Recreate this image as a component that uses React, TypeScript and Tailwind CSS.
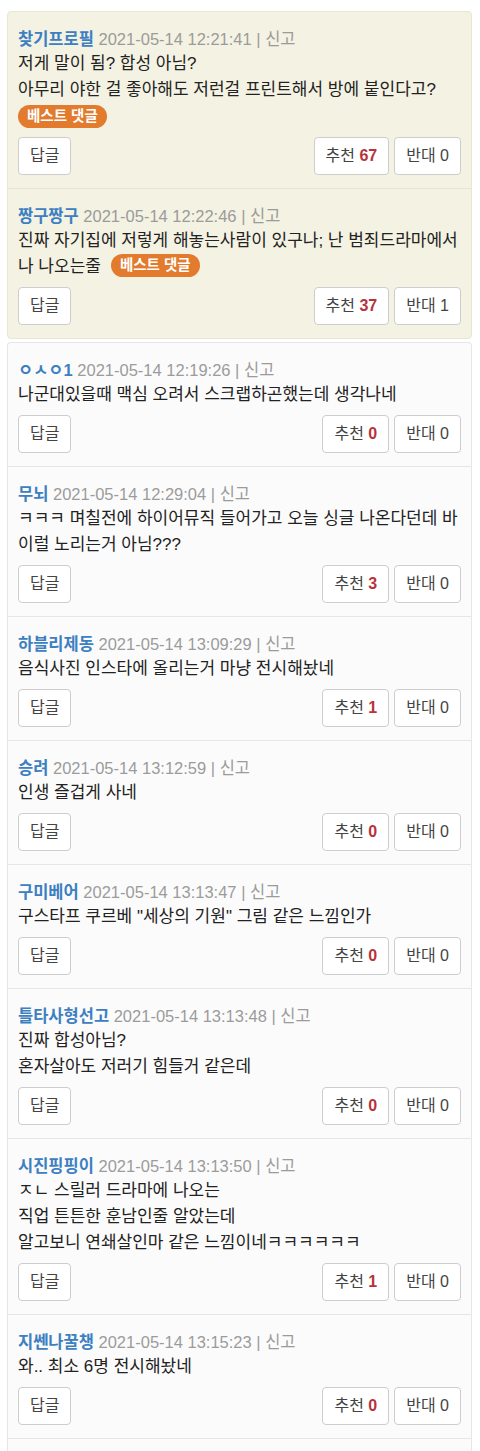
import React from "react";

type C = {
  name: string;
  date: string;
  lines: React.ReactNode;
  up: number;
  down: number;
  best?: "block" | "inline";
};

const best: C[] = [
  {
    name: "찾기프로필",
    date: "2021-05-14 12:21:41",
    lines: (
      <>
        저게 말이 됨? 합성 아님?
        <br />
        아무리 야한 걸 좋아해도 저런걸 프린트해서 방에 붙인다고?
      </>
    ),
    up: 67,
    down: 0,
    best: "block",
  },
  {
    name: "짱구짱구",
    date: "2021-05-14 12:22:46",
    lines: (
      <>
        진짜 자기집에 저렇게 해놓는사람이 있구나; 난 범죄드라마에서
        <br />
        나 나오는줄
      </>
    ),
    up: 37,
    down: 1,
    best: "inline",
  },
];

const normal: C[] = [
  { name: "ㅇㅅㅇ1", date: "2021-05-14 12:19:26", lines: <>나군대있을때 맥심 오려서 스크랩하곤했는데 생각나네</>, up: 0, down: 0 },
  {
    name: "무뇌",
    date: "2021-05-14 12:29:04",
    lines: (
      <>
        ㅋㅋㅋ 며칠전에 하이어뮤직 들어가고 오늘 싱글 나온다던데 바
        <br />
        이럴 노리는거 아님???
      </>
    ),
    up: 3,
    down: 0,
  },
  { name: "하블리제동", date: "2021-05-14 13:09:29", lines: <>음식사진 인스타에 올리는거 마냥 전시해놨네</>, up: 1, down: 0 },
  { name: "승려", date: "2021-05-14 13:12:59", lines: <>인생 즐겁게 사네</>, up: 0, down: 0 },
  { name: "구미베어", date: "2021-05-14 13:13:47", lines: <>구스타프 쿠르베 "세상의 기원" 그림 같은 느낌인가</>, up: 0, down: 0 },
  {
    name: "틀타사형선고",
    date: "2021-05-14 13:13:48",
    lines: (
      <>
        진짜 합성아님?
        <br />
        혼자살아도 저러기 힘들거 같은데
      </>
    ),
    up: 0,
    down: 0,
  },
  {
    name: "시진핑핑이",
    date: "2021-05-14 13:13:50",
    lines: (
      <>
        ㅈㄴ 스릴러 드라마에 나오는
        <br />
        직업 튼튼한 훈남인줄 알았는데
        <br />
        알고보니 연쇄살인마 같은 느낌이네ㅋㅋㅋㅋㅋㅋ
      </>
    ),
    up: 1,
    down: 0,
  },
  { name: "지쎈나꿀챙", date: "2021-05-14 13:15:23", lines: <>와.. 최소 6명 전시해놨네</>, up: 0, down: 0 },
];

function Badge({ inline }: { inline?: boolean }) {
  return (
    <span
      className={
        "inline-flex h-[23px] items-center rounded-full bg-[#e27b2d] px-[9px] text-[14.5px] font-bold leading-none text-white align-middle " +
        (inline ? "ml-[10px] relative top-[-2px]" : "")
      }
    >
      베스트 댓글
    </span>
  );
}

function Btn({ children }: { children: React.ReactNode }) {
  return (
    <button className="flex h-[38px] items-center rounded-[4px] border border-[#cdcdcd] bg-white px-[11px] text-[16px] text-[#444]">
      {children}
    </button>
  );
}

function Row({ c, last, bestBox }: { c: C; last?: boolean; bestBox?: boolean }) {
  return (
    <div
      className={
        "px-[10px] pt-[16px] pb-[13px] " +
        (last ? "" : bestBox ? "border-b border-[#e7e4cf]" : "border-b border-[#e6e6e6]")
      }
    >
      <div className="whitespace-nowrap text-[16.5px] leading-[23px]">
        <span className="font-bold text-[#3d80c2]">{c.name}</span>{" "}
        <span className="text-[#9b9b9b]">{c.date} | 신고</span>
      </div>
      <div className="whitespace-nowrap text-[17px] leading-[26px] text-[#222]">
        {c.lines}
        {c.best === "inline" && <Badge inline />}
      </div>
      {c.best === "block" && (
        <div className="flex h-[27px] items-center">
          <Badge />
        </div>
      )}
      <div className="mt-[7px] flex items-center justify-between">
        <Btn>답글</Btn>
        <div className="flex gap-[5px]">
          <Btn>
            추천&nbsp;<b className="text-[#b8323a]">{c.up}</b>
          </Btn>
          <Btn>반대&nbsp;{c.down}</Btn>
        </div>
      </div>
    </div>
  );
}

export default function App() {
  return (
    <div
      className="min-h-[1451px] bg-white pl-[7px] pr-[8px] pt-[11px]"
      style={{ fontFamily: '"Liberation Sans", "Noto Sans CJK KR", sans-serif' }}
    >
      <div className="rounded-[4px] border border-[#e9e6d2] bg-[#f4f2e2]">
        {best.map((c, i) => (
          <Row key={i} c={c} bestBox last={i === best.length - 1} />
        ))}
      </div>
      <div className="mt-[3px] rounded-t-[4px] border border-b-0 border-[#e6e6e6] bg-[#fbfbfb]">
        {normal.map((c, i) => (
          <Row key={i} c={c} />
        ))}
        <div className="h-[60px]" />
      </div>
    </div>
  );
}
